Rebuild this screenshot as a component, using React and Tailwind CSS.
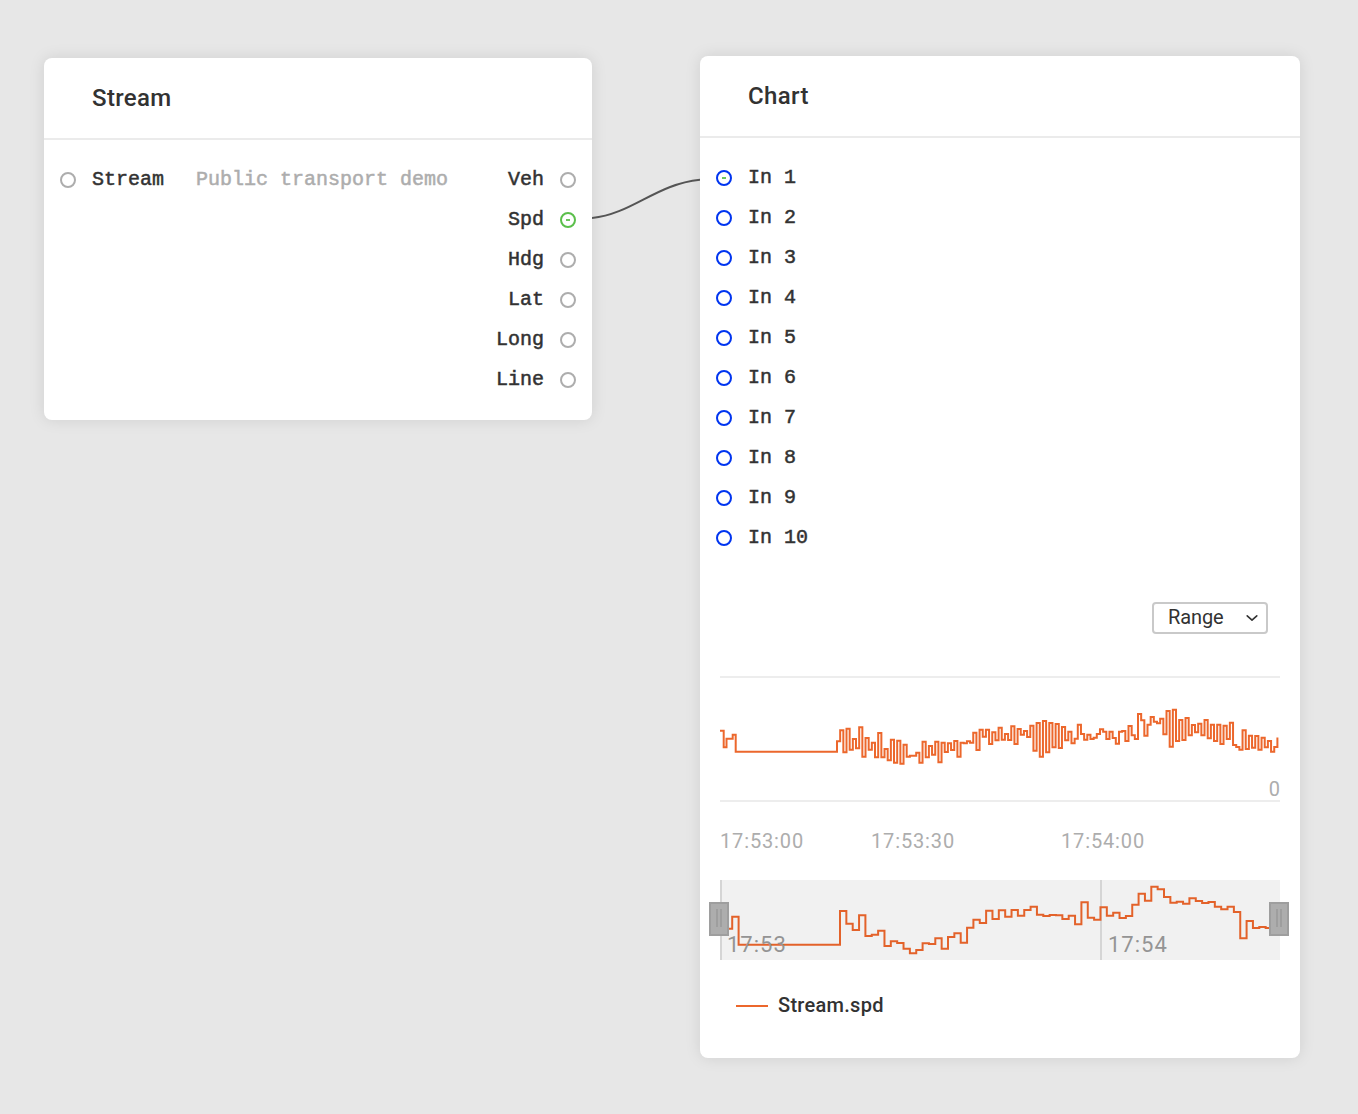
import React from 'react';

const speed = [
  244, 211, 277, 206, 269, 237, 265, 202, 290, 234, 269, 248, 292, 219,
  292, 267, 301, 239, 308, 242, 311, 254, 290, 287, 287, 278, 308, 245, 292, 258, 284, 245, 307, 248, 276, 250, 270,
  243, 290, 248, 250, 244, 248, 218, 270, 209, 230, 209, 252, 217, 241, 203, 239, 222, 240, 199, 252, 207, 224, 213,
  231, 197, 272, 189, 290, 183, 277, 189, 262, 192, 264, 201, 241, 215, 250, 236, 194,
  222, 239, 224, 237, 233, 222, 208, 215, 237, 215, 234, 251, 215, 213, 243, 198, 226, 237, 162, 181, 227, 194, 171,
  185, 190, 176, 223, 153, 260, 149, 243, 180, 240, 174, 226, 195, 217, 191, 226, 180, 235, 194, 243, 194, 252, 197,
  237, 188, 255, 261, 269, 211, 267, 227, 263, 228, 269, 233, 262, 243, 275, 261,
];

const overview = [
  123, 161, 180, 136, 198, 194, 182, 228, 214, 219, 236, 250, 240, 220, 222, 205, 236, 201, 190, 218, 173, 149, 159,
  122, 147, 121, 140, 120, 137, 120, 110, 134, 138, 135, 136, 147, 137, 163, 97, 143, 149, 112, 137, 128, 144, 138,
  104, 71, 92, 50, 58, 81, 98, 95, 101, 85, 93, 99, 96, 110, 118, 110, 126, 205, 153, 174, 171, 174,
];

function steps(values, x0, dx, toY) {
  return values.map((v, i) => `V${toY(v).toFixed(2)}H${(x0 + (i + 1) * dx).toFixed(2)}`).join('');
}

const speedPath =
  'M0 54.8H3.7V71.3H6.5V62.8H12.7V58.8H15.7V75.7H117' +
  steps(speed, 117, 440.4 / speed.length, (v) => v / 3 - 16) +
  'V61.5';

const overviewPath =
  'M0 48.7H12.2V36.7H18.6V64.7H120' + steps(overview, 120, 6.353, (v) => v / 3 - 10);

function Port({ tone, active }) {
  const ring = { gray: 'border-[#adadad]', green: 'border-[#5bbf4b]', blue: 'border-[#0034f0]' }[tone];
  return (
    <span className={`flex h-4 w-4 shrink-0 items-center justify-center rounded-full border-2 bg-white ${ring}`}>
      {active && <span className="h-0.5 w-1 bg-[#6cc65c]" />}
    </span>
  );
}

const mono = "font-['Liberation_Mono',monospace] text-[20px] leading-10 [-webkit-text-stroke:0.5px_currentColor]";
const card = 'absolute rounded-lg bg-white shadow-[0_0_16px_rgba(0,0,0,0.1)]';

function Header({ children }) {
  return (
    <div className="flex h-[82px] items-center border-b-2 border-[#ebebeb] px-12 text-2xl font-medium">
      <span className="tracking-[0.35px]">{children}</span>
    </div>
  );
}

function StreamNode() {
  return (
    <section className={`${card} left-[44px] top-[58px] h-[362px] w-[548px]`}>
      <Header>Stream</Header>
      <div className={`flex justify-between px-4 pt-5 ${mono}`}>
        <div className="flex h-10 items-center">
          <Port tone="gray" />
          <span className="ml-4">Stream</span>
          <span className="ml-8 text-[#adadad]">Public transport demo</span>
        </div>
        <div>
          {['Veh', 'Spd', 'Hdg', 'Lat', 'Long', 'Line'].map((name) => (
            <div key={name} className="flex h-10 items-center justify-end gap-4">
              <span>{name}</span>
              <Port tone={name === 'Spd' ? 'green' : 'gray'} active={name === 'Spd'} />
            </div>
          ))}
        </div>
      </div>
    </section>
  );
}

function Handle({ side }) {
  return (
    <span
      className={`absolute top-[22px] flex h-[34px] w-5 items-center justify-center gap-0.5 border-2 border-[#9e9e9e] bg-[#adadad] ${side}`}
    >
      <span className="-mt-0.5 h-[18px] w-0.5 bg-[#9e9e9e]" />
      <span className="-mt-0.5 h-[18px] w-0.5 bg-[#9e9e9e]" />
    </span>
  );
}

function ChartNode() {
  return (
    <section className={`${card} left-[700px] top-[56px] h-[1002px] w-[600px]`}>
      <Header>Chart</Header>
      <div className={`px-4 pt-5 ${mono}`}>
        {[1, 2, 3, 4, 5, 6, 7, 8, 9, 10].map((n) => (
          <div key={n} className="flex h-10 items-center gap-4">
            <Port tone="blue" active={n === 1} />
            <span>In {n}</span>
          </div>
        ))}
      </div>

      <div className="mt-11 flex justify-end pr-8">
        <button className="flex h-8 w-[116px] items-center justify-between rounded border-2 border-[#c9c9c9] pl-3.5 pr-2 text-[20px]">
          <span className="-mt-0.5 tracking-[-0.1px]">Range</span>
          <svg width="12" height="8" viewBox="0 0 12 8" fill="none" stroke="#323232" strokeWidth="1.6" strokeLinecap="round" strokeLinejoin="round">
            <path d="M1.2 1.8 6 6.2 10.8 1.8" />
          </svg>
        </button>
      </div>

      <div className="mx-5 mt-[42px]">
        <div className="relative h-[126px] border-y-2 border-[#ededed]">
          <svg className="-mt-0.5 block overflow-visible" width="560" height="126" viewBox="0 0 560 126" fill="none">
            <path d={speedPath} stroke="#ec672c" strokeWidth="2" />
          </svg>
          <span className="absolute bottom-0 right-0 text-[20px] leading-[22px] text-[#adadad]">0</span>
        </div>

        <div className="mt-[25px] flex h-7 text-[20px] leading-7 text-[#adadad]">
          <span className="w-[151px] tracking-[0.86px]">17:53:00</span>
          <span className="w-[190px] tracking-[0.86px]">17:53:30</span>
          <span className="tracking-[0.86px]">17:54:00</span>
        </div>

        <div className="relative mt-[25px] h-20 bg-[#f1f1f1]">
          <svg className="block" width="560" height="80" viewBox="0 0 560 80" fill="none">
            <path d="M1 0V80M381 0V80" stroke="#d5d5d5" strokeWidth="2" />
            <path d={overviewPath} stroke="#e3622a" strokeWidth="2" />
          </svg>
          <span className="absolute left-[7px] top-[51px] text-[22px] leading-7 tracking-[1px] text-[#949494]">17:53</span>
          <span className="absolute left-[388px] top-[51px] text-[22px] leading-7 tracking-[1px] text-[#949494]">17:54</span>
          <Handle side="-left-[11px]" />
          <Handle side="-right-[9px]" />
        </div>

        <div className="mt-[30px] flex h-8 items-center gap-2.5 pl-4">
          <span className="h-0.5 w-8 bg-[#ec672c]" />
          <span className="-mt-0.5 text-[20px] font-medium tracking-[0.28px]">Stream.spd</span>
        </div>
      </div>
    </section>
  );
}

export default function App() {
  return (
    <main className="relative h-[1114px] w-[1358px] overflow-hidden bg-[#e7e7e7] font-['Roboto',sans-serif] text-[#323232]">
      <StreamNode />
      <ChartNode />
      <svg className="absolute left-[592px] top-[170px]" width="108" height="60" viewBox="0 0 108 60" fill="none">
        <path d="M0 48C40 44 64 14 108 9.7" stroke="#555" strokeWidth="2" />
      </svg>
    </main>
  );
}
